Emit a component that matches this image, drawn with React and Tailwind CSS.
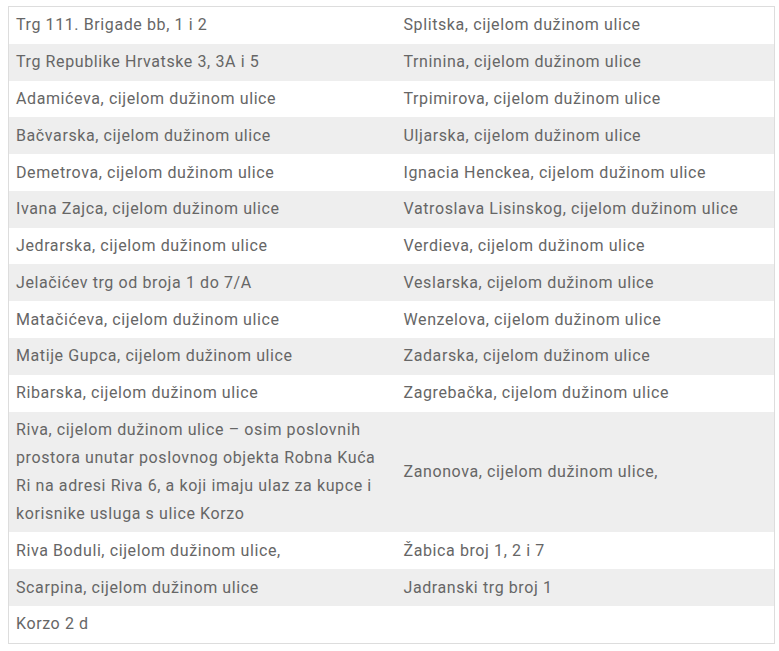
import React from "react";

const rows = [
  ["Trg 111. Brigade bb, 1 i 2", "Splitska, cijelom dužinom ulice"],
  ["Trg Republike Hrvatske 3, 3A i 5", "Trninina, cijelom dužinom ulice"],
  ["Adamićeva, cijelom dužinom ulice", "Trpimirova, cijelom dužinom ulice"],
  ["Bačvarska, cijelom dužinom ulice", "Uljarska, cijelom dužinom ulice"],
  ["Demetrova, cijelom dužinom ulice", "Ignacia Henckea, cijelom dužinom ulice"],
  ["Ivana Zajca, cijelom dužinom ulice", "Vatroslava Lisinskog, cijelom dužinom ulice"],
  ["Jedrarska, cijelom dužinom ulice", "Verdieva, cijelom dužinom ulice"],
  ["Jelačićev trg od broja 1 do 7/A", "Veslarska, cijelom dužinom ulice"],
  ["Matačićeva, cijelom dužinom ulice", "Wenzelova, cijelom dužinom ulice"],
  ["Matije Gupca, cijelom dužinom ulice", "Zadarska, cijelom dužinom ulice"],
  ["Ribarska, cijelom dužinom ulice", "Zagrebačka, cijelom dužinom ulice"],
  [
    "Riva, cijelom dužinom ulice – osim poslovnih prostora unutar poslovnog objekta Robna Kuća Ri na adresi Riva 6, a koji imaju ulaz za kupce i korisnike usluga s ulice Korzo",
    "Zanonova, cijelom dužinom ulice,",
  ],
  ["Riva Boduli, cijelom dužinom ulice,", "Žabica broj 1, 2 i 7"],
  ["Scarpina, cijelom dužinom ulice", "Jadranski trg broj 1"],
  ["Korzo 2 d", ""],
];

export default function App() {
  return (
    <div className="bg-white min-h-[651px] pt-[6px] pl-[8px]" style={{ fontFamily: "Roboto, sans-serif" }}>
      <table className="w-[767px] border border-[#dddddd] border-collapse text-[16px] tracking-[0.6px] leading-[28px] text-[#666666]">
        <tbody>
          {rows.map((r, i) => (
            <tr key={i} className={i % 2 === 1 ? "bg-[#eeeeee]" : "bg-white"}>
              <td className="w-[387px] align-middle py-[4.4px] pl-[7px] pr-[8px]">{r[0]}</td>
              <td className="align-middle py-[4.4px] pl-[8px] pr-[8px]">{r[1]}</td>
            </tr>
          ))}
        </tbody>
      </table>
    </div>
  );
}
